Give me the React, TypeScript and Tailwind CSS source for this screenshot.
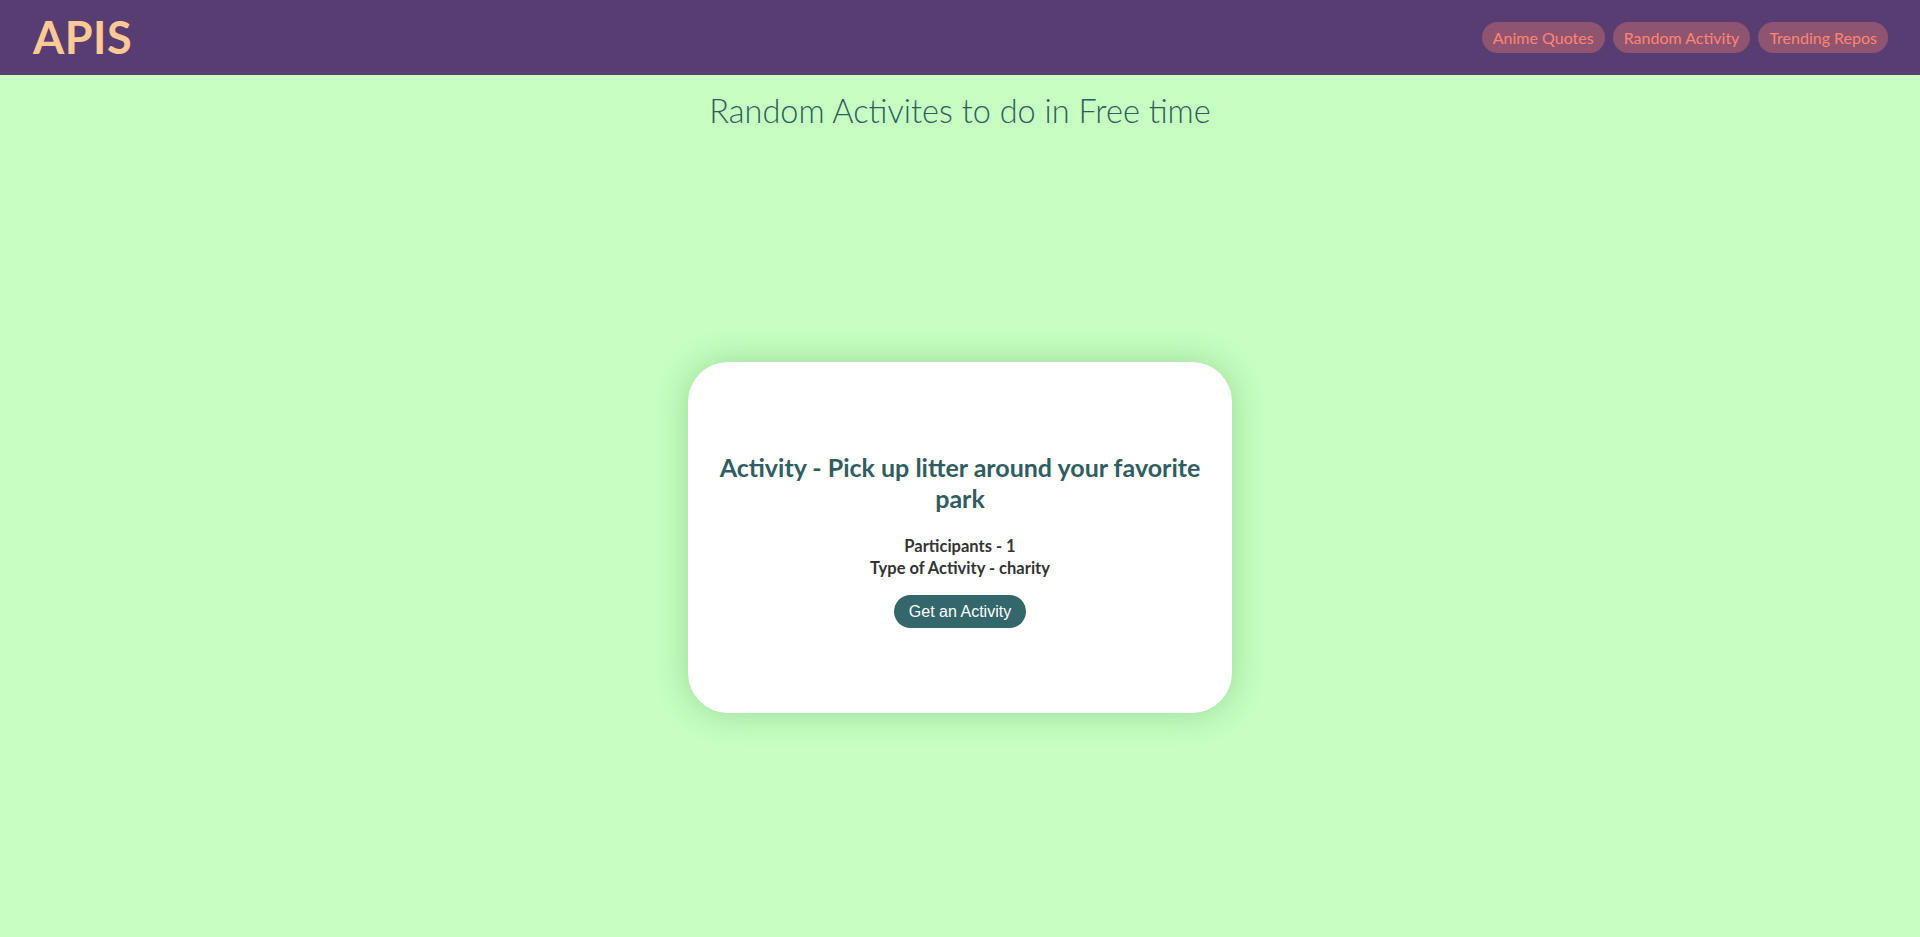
import React, { useState } from 'react';

const links = ["Anime Quotes", "Random Activity", "Trending Repos"];

const activity = {
  activity: "Pick up litter around your favorite park",
  participants: 1,
  type: "charity",
};

const App = () => {
  const [current] = useState(activity);

  return (
    <div className="min-h-screen flex flex-col bg-[#c6ffc1] font-['Lato','Open_Sans',sans-serif]">
      {/* Navbar */}
      <nav className="h-[75px] flex items-center justify-between pl-[33px] pr-8 bg-[#583d72]">
        <h1 className="text-[45px] font-bold text-[#ffc996] leading-none tracking-[0.5px]">APIS</h1>
        <div className="flex items-center gap-2">
          {links.map((link) => (
            <a
              key={link}
              href="#"
              className="h-[31px] flex items-center px-[11px] rounded-full bg-[#8f5470] text-[#ff8474] text-[16px]"
            >
              {link}
            </a>
          ))}
        </div>
      </nav>

      {/* Heading */}
      <h2 className="mt-[17px] text-center text-[32.5px] font-light leading-[38px] text-[#2f5d62]">
        Random Activites to do in Free time
      </h2>

      {/* Card */}
      <main className="flex-1 flex items-center justify-center pt-2">
        <div className="w-[544px] h-[351px] rounded-[40px] bg-white shadow-[0_0_32px_rgba(40,110,40,0.28)] flex flex-col items-center justify-center px-6 pt-[5px] text-center">
          <h3 className="text-[25px] font-bold leading-[31px] text-[#2f5d62]">
            Activity - {current.activity}
          </h3>
          <div className="mt-[21px] text-[16.5px] font-bold leading-[22px] text-[#333333]">
            <p>Participants - {current.participants}</p>
            <p>Type of Activity - {current.type}</p>
          </div>
          <button className="mt-[16px] h-[33px] px-[15px] rounded-full bg-[#33676c] text-white text-[16px] font-['Liberation_Sans',Arial,sans-serif]">
            Get an Activity
          </button>
        </div>
      </main>
    </div>
  );
};

export default App;
